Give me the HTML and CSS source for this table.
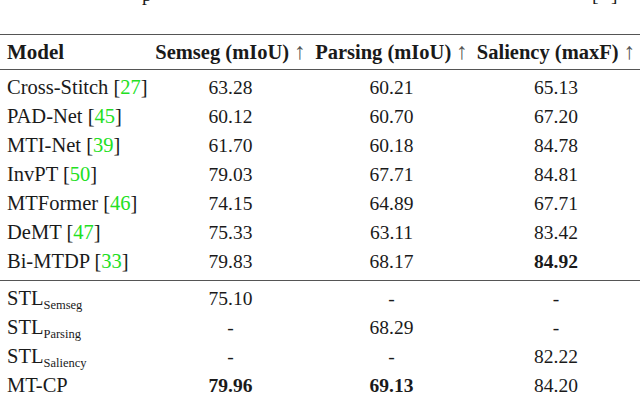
FILE: index.html
```html
<!DOCTYPE html>
<html>
<head>
<meta charset="utf-8">
<link rel="stylesheet" href="styles.css">
</head>
<body>
<div class="page">
  <div class="cut">
    <span class="frag f1">p</span><span class="frag f2">[</span><span class="frag f3">]</span>
  </div>
  <table class="results">
    <colgroup>
      <col class="c-model"><col class="c-num"><col class="c-num"><col class="c-sal">
    </colgroup>
    <thead>
      <tr>
        <th class="left">Model</th>
        <th>Semseg (mIoU) <span class="arr">↑</span></th>
        <th>Parsing (mIoU) <span class="arr">↑</span></th>
        <th>Saliency (maxF) <span class="arr">↑</span></th>
      </tr>
    </thead>
    <tbody class="multi">
      <tr class="first"><td class="left">Cross-Stitch [<span class="cite">27</span>]</td><td>63.28</td><td>60.21</td><td>65.13</td></tr>
      <tr><td class="left">PAD-Net [<span class="cite">45</span>]</td><td>60.12</td><td>60.70</td><td>67.20</td></tr>
      <tr><td class="left">MTI-Net [<span class="cite">39</span>]</td><td>61.70</td><td>60.18</td><td>84.78</td></tr>
      <tr><td class="left">InvPT [<span class="cite">50</span>]</td><td>79.03</td><td>67.71</td><td>84.81</td></tr>
      <tr><td class="left">MTFormer [<span class="cite">46</span>]</td><td>74.15</td><td>64.89</td><td>67.71</td></tr>
      <tr><td class="left">DeMT [<span class="cite">47</span>]</td><td>75.33</td><td>63.11</td><td>83.42</td></tr>
      <tr class="last"><td class="left">Bi-MTDP [<span class="cite">33</span>]</td><td>79.83</td><td>68.17</td><td><b>84.92</b></td></tr>
    </tbody>
    <tbody class="single">
      <tr class="first"><td class="left">STL<sub>Semseg</sub></td><td>75.10</td><td>-</td><td>-</td></tr>
      <tr><td class="left">STL<sub>Parsing</sub></td><td>-</td><td>68.29</td><td>-</td></tr>
      <tr><td class="left">STL<sub>Saliency</sub></td><td>-</td><td>-</td><td>82.22</td></tr>
      <tr class="last"><td class="left">MT-CP</td><td><b>79.96</b></td><td><b>69.13</b></td><td>84.20</td></tr>
    </tbody>
  </table>
</div>
</body>
</html>
```
FILE: styles.css
```css
html, body {
  margin: 0;
  padding: 0;
  background: #ffffff;
}
.page {
  width: 640px;
  height: 402px;
  overflow: hidden;
  font-family: "Liberation Serif", "Times New Roman", serif;
  color: #1a1a1a;
  font-size: 19.5px;
}
.cut {
  position: relative;
  height: 34px;
  overflow: hidden;
}
.frag {
  position: absolute;
  top: -15px;
  line-height: 19px;
}
.f1 { left: 142px; }
.f2 { left: 592px; }
.f3 { left: 611px; }
.results {
  width: 640px;
  border-collapse: collapse;
  border-top: 1.5px solid #555;
  border-bottom: 1.5px solid #555;
}
.c-model { width: 150px; }
.c-num { width: 161px; }
.c-sal { width: 168px; }
th, td {
  text-align: center;
  padding: 0;
  white-space: nowrap;
}
th {
  font-weight: bold;
  font-size: 20.5px;
  height: 33px;
  border-bottom: 1px solid #555;
  padding-top: 1px;
}
th.left { font-size: 21px; }
.left {
  text-align: left;
  padding-left: 7px;
  font-size: 20.5px;
}
.arr {
  font-weight: normal;
  color: #555;
  font-size: 23px;
  line-height: 0;
}
td {
  height: 29px;
}
tr.first td { padding-top: 3px; }
tr.last td { padding-bottom: 4px; }
tbody.multi tr.last td { border-bottom: 1px solid #555; }
.cite { color: #22e022; }
sub {
  font-size: 12.5px;
  vertical-align: -4px;
  line-height: 0;
}
b { font-weight: bold; }
```
